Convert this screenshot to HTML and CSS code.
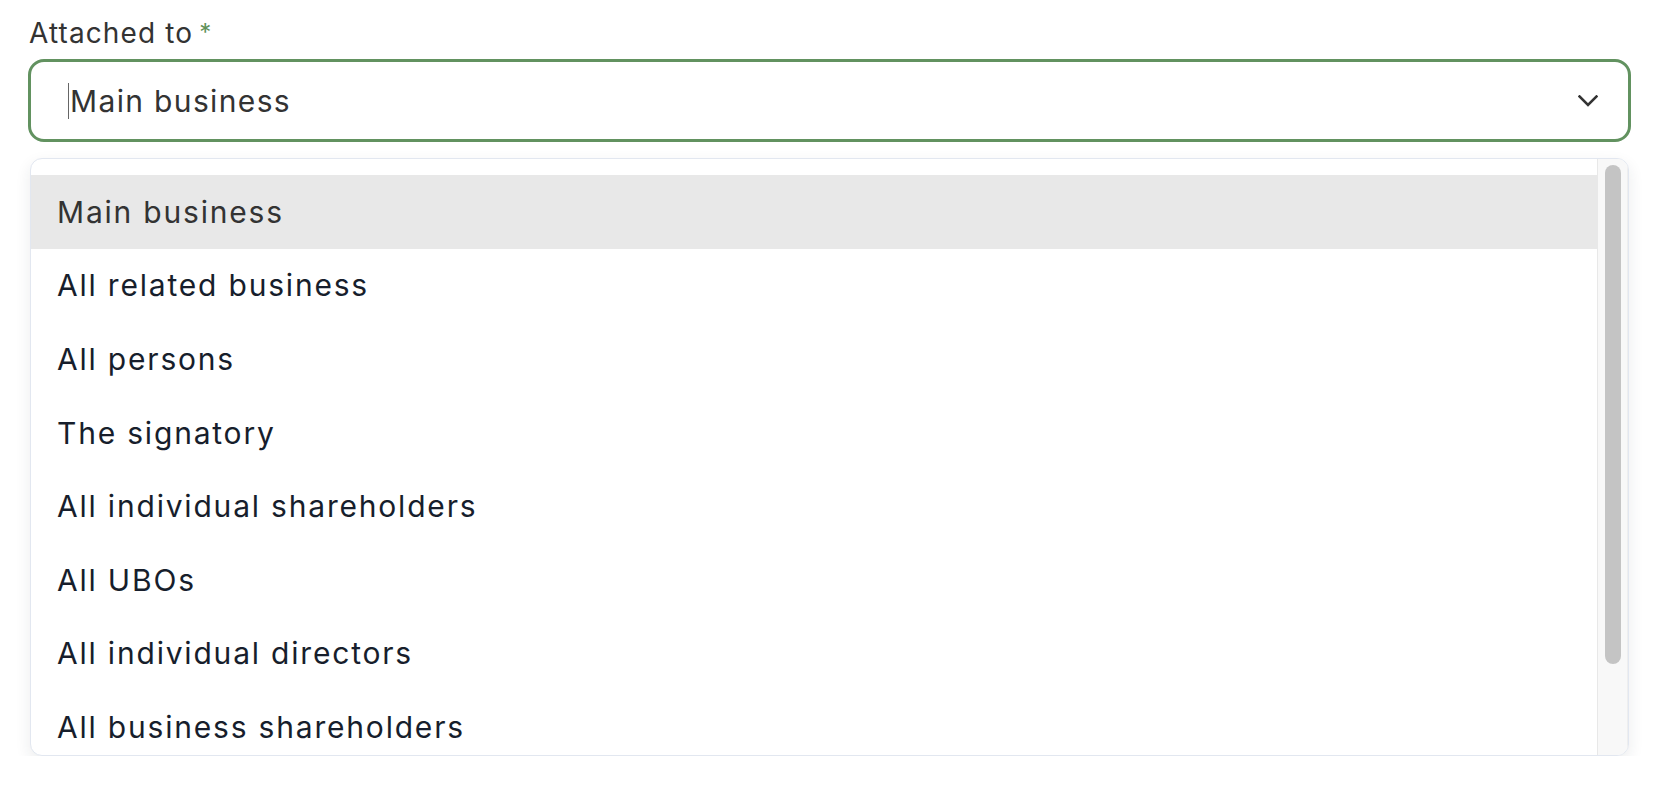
FILE: index.html
```html
<!DOCTYPE html>
<html lang="en">
<head>
<meta charset="utf-8">
<title>Attached to</title>
<link rel="stylesheet" href="styles.css">
</head>
<body>
<div class="field">
  <label class="label">Attached to <span class="req">*</span></label>
  <div class="select">
    <span class="caret"></span><span class="value">Main business</span>
    <svg class="chev" width="20" height="12" viewBox="0 0 20 12" aria-hidden="true"><path d="M1.5 1.5 L10 10 L18.5 1.5" fill="none" stroke="#333" stroke-width="2.6" stroke-linecap="square"/></svg>
  </div>
  <div class="menu">
    <ul class="list">
      <li class="opt active">Main business</li>
      <li class="opt">All related business</li>
      <li class="opt">All persons</li>
      <li class="opt">The signatory</li>
      <li class="opt">All individual shareholders</li>
      <li class="opt">All UBOs</li>
      <li class="opt">All individual directors</li>
      <li class="opt">All business shareholders</li>
    </ul>
    <div class="track"><div class="thumb"></div></div>
  </div>
</div>
</body>
</html>
```
FILE: styles.css
```css
html, body {
  margin: 0;
  padding: 0;
  background: #ffffff;
}
body {
  font-family: Inter, "Noto Sans", "Liberation Sans", sans-serif;
  color: #333333;
}
.field {
  padding: 16px 49px 0 28px;
  display: flex;
  flex-direction: column;
}
.label {
  font-size: 28px;
  line-height: 34px;
  letter-spacing: 0.04em;
  color: #333333;
  margin-bottom: 9px;
  padding-left: 1px;
}
.req {
  color: #5f915a;
  font-size: 24px;
  letter-spacing: 0;
  margin-left: -3px;
  vertical-align: 2px;
}
.select {
  height: 83px;
  box-sizing: border-box;
  border: 3px solid #629260;
  border-radius: 16px;
  display: flex;
  align-items: center;
  padding: 0 30px 0 37px;
}
.caret {
  width: 1px;
  height: 36px;
  background: #666666;
  margin-right: 1px;
  margin-top: 1px;
}
.value {
  flex: 1;
  font-size: 30px;
  line-height: 40px;
  letter-spacing: 0.045em;
  color: #333333;
}
.chev {
  display: block;
}
.menu {
  margin: 16px 2px 0 2px;
  height: 598px;
  box-sizing: border-box;
  border: 1px solid #e2e7f0;
  border-radius: 12px;
  overflow: hidden;
  display: flex;
  box-shadow: 0 6px 16px rgba(30, 40, 60, 0.09);
  background: #ffffff;
}
.list {
  list-style: none;
  margin: 0;
  padding: 16px 0 0 0;
  flex: 1;
}
.opt {
  height: 73.6px;
  display: flex;
  align-items: center;
  padding-left: 26px;
  font-size: 30px;
  letter-spacing: 0.06em;
  color: #171e2c;
}
.opt.active {
  background: #e8e8e8;
  color: #333333;
}
.track {
  width: 29px;
  flex: none;
  background: #f8f8f8;
  border-left: 1px solid #e8e8e8;
  border-right: 1px solid #eeeeee;
  padding-top: 6px;
  display: flex;
  justify-content: center;
}
.thumb {
  width: 16px;
  height: 499px;
  border-radius: 8px;
  background: #c4c4c4;
}
```
